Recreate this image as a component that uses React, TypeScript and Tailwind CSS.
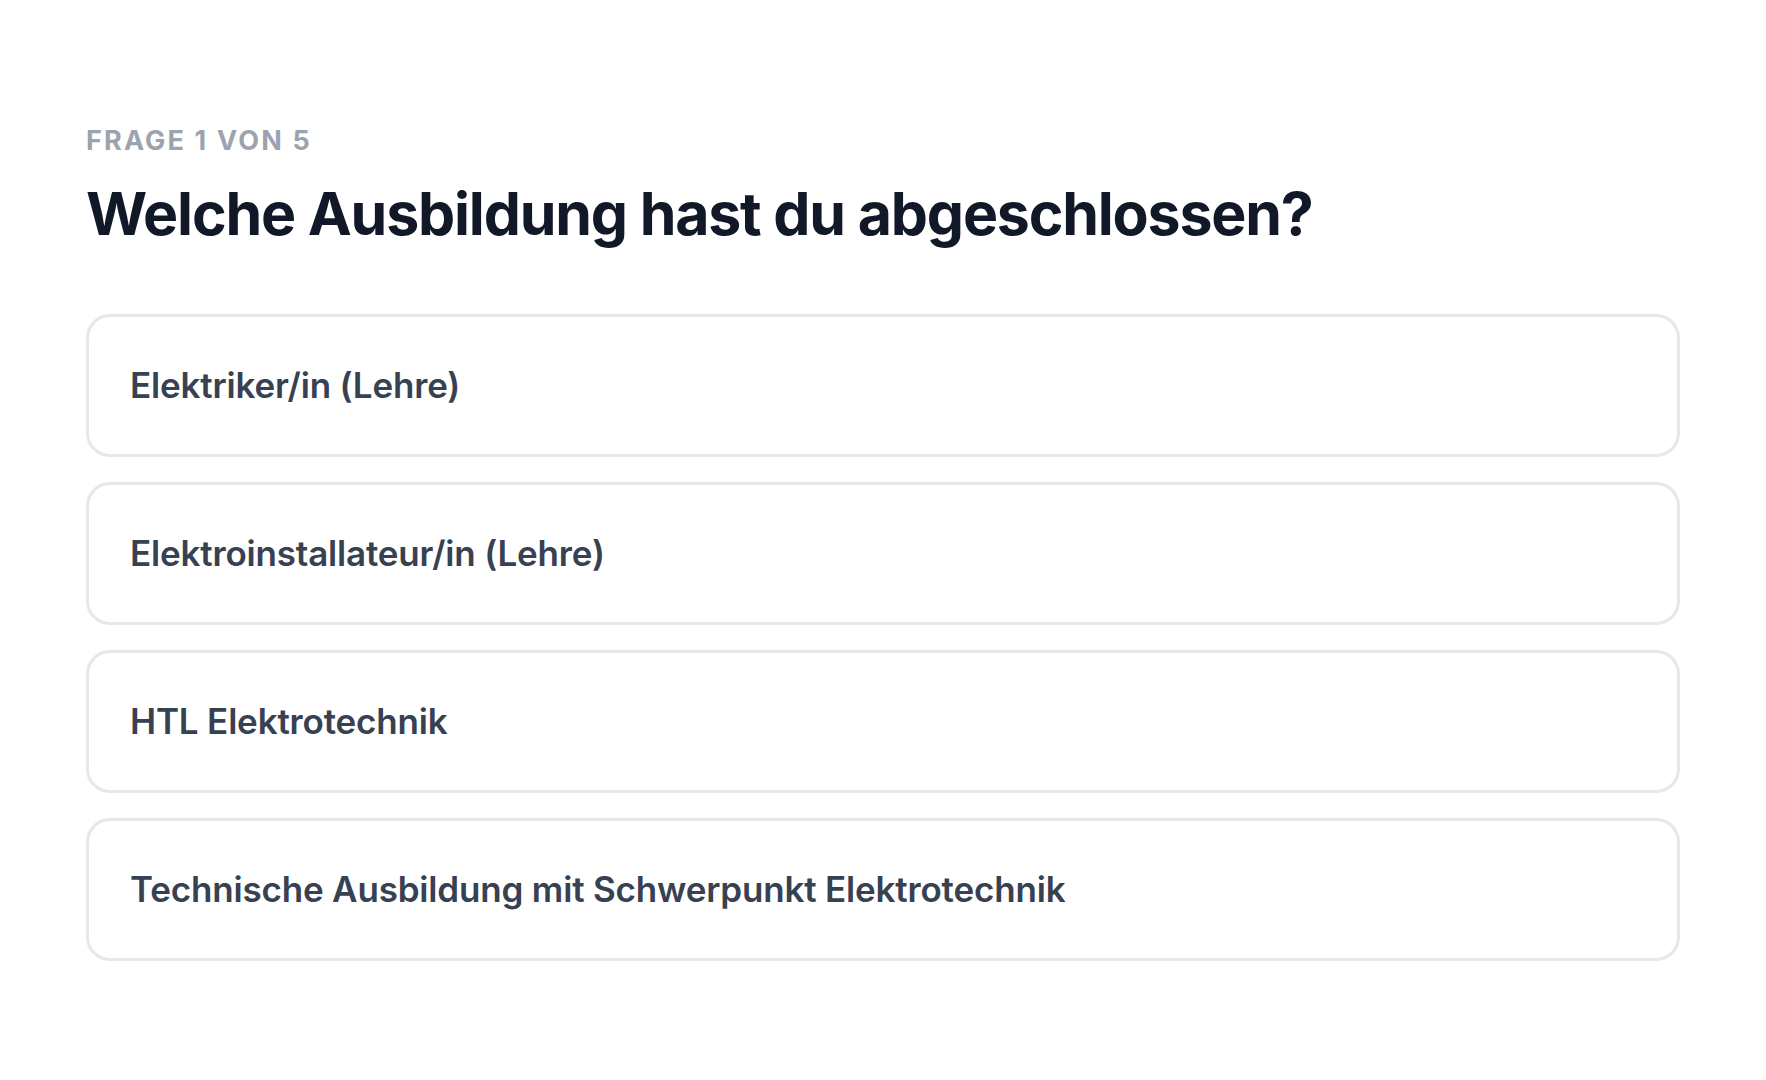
import React, { useState } from 'react';

const options = [
  'Elektriker/in (Lehre)',
  'Elektroinstallateur/in (Lehre)',
  'HTL Elektrotechnik',
  'Technische Ausbildung mit Schwerpunkt Elektrotechnik',
];

export default function App() {
  const [selected, setSelected] = useState<number | null>(null);

  return (
    <div
      className="min-h-screen bg-white px-[86px] pt-[124px]"
      style={{ fontFamily: 'Inter, "Noto Sans", sans-serif' }}
    >
      {/* Step counter */}
      <p className="text-[27px] font-bold uppercase tracking-[0.08em] text-[#9ca3af] leading-[34px]">
        Frage 1 von 5
      </p>

      {/* Question */}
      <h1 className="mt-[20px] text-[59px] font-bold leading-[72px] tracking-[-0.02em] text-[#111827]">
        Welche Ausbildung hast du abgeschlossen?
      </h1>

      {/* Answer options */}
      <div className="mt-[64px] flex flex-col gap-[25px]">
        {options.map((label, i) => (
          <button
            key={label}
            onClick={() => setSelected(i)}
            className={`flex h-[143px] w-full items-center rounded-[24px] border-[3px] bg-white px-[41px] text-left text-[35px] font-semibold tracking-[-0.005em] text-[#374151] ${
              selected === i ? 'border-[#111827]' : 'border-[#e5e7eb]'
            }`}
          >
            {label}
          </button>
        ))}
      </div>
    </div>
  );
}
